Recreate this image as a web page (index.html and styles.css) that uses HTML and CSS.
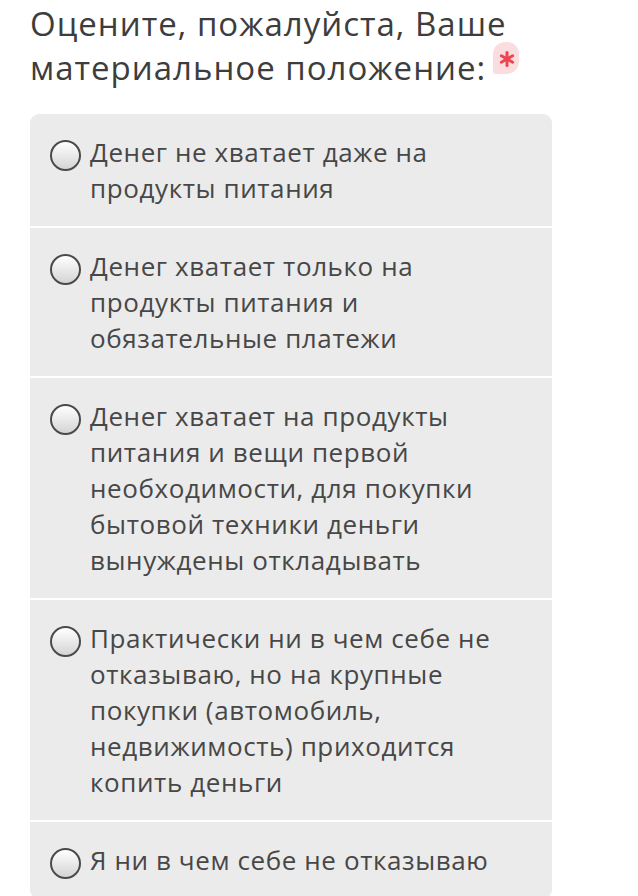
FILE: index.html
```html
<!DOCTYPE html>
<html lang="ru">
<head>
<meta charset="utf-8">
<link rel="stylesheet" href="styles.css">
</head>
<body>
<div class="question">
  <h1 class="title">Оцените, пожалуйста, Ваше материальное положение: <span class="req"><svg viewBox="0 0 28 34" width="28" height="34"><path class="req-bg" d="M14 1 C22 1 27 6 27 14 L27 20 C27 28 21 33 14 33 L4 33 C2 33 1 32 1 30 L1 14 C1 6 6 1 14 1 Z"/><g class="req-star"><line x1="15" y1="11.5" x2="15" y2="24.5"/><line x1="9.4" y1="14.75" x2="20.6" y2="21.25"/><line x1="9.4" y1="21.25" x2="20.6" y2="14.75"/></g></svg></span></h1>
  <div class="options">
    <label class="option"><span class="radio"></span><span class="text">Денег не хватает даже на продукты питания</span></label>
    <label class="option"><span class="radio"></span><span class="text">Денег хватает только на продукты питания и обязательные платежи</span></label>
    <label class="option"><span class="radio"></span><span class="text">Денег хватает на продукты питания и вещи первой необходимости, для покупки бытовой техники деньги вынуждены откладывать</span></label>
    <label class="option"><span class="radio"></span><span class="text">Практически ни в чем себе не отказываю, но на крупные покупки (автомобиль, недвижимость) приходится копить деньги</span></label>
    <label class="option"><span class="radio"></span><span class="text">Я ни в чем себе не отказываю</span></label>
  </div>
</div>
</body>
</html>
```

FILE: styles.css
```css
html, body {
  margin: 0;
  padding: 0;
  background: #ffffff;
}
body {
  font-family: "Open Sans", "Noto Sans", sans-serif;
  color: #444444;
}
.question {
  width: 522px;
  padding: 0 0 0 30px;
}
.title {
  margin: 0 -40px 0 0;
  padding-top: 2px;
  font-weight: 400;
  font-size: 33px;
  letter-spacing: 1px;
  line-height: 44px;
  color: #3d3d3d;
}
.req {
  display: inline-block;
  vertical-align: top;
  position: relative;
  top: -5px;
  margin-left: -4px;
  width: 28px;
  height: 34px;
}
.req svg { display: block; }
.req-bg { fill: #fbdde0; }
.req-star line {
  stroke: #ea4753;
  stroke-width: 3;
  stroke-linecap: round;
}
.options {
  margin-top: 24px;
  background: #ffffff;
  border-radius: 9px;
  overflow: hidden;
  display: flex;
  flex-direction: column;
  gap: 2px;
}
.option {
  display: flex;
  align-items: flex-start;
  gap: 9px;
  padding: 20px 20px 20px 20px;
  background: #ebebeb;
  font-size: 26px;
  letter-spacing: 0.6px;
  line-height: 36px;
  color: #474747;
}
.radio {
  flex: none;
  box-sizing: border-box;
  width: 31px;
  height: 31px;
  margin-top: 6px;
  border: 2px solid #4a4a4a;
  border-radius: 50%;
  background: linear-gradient(#ffffff, #d4d4d4);
}
.text {
  flex: 1;
}
```
